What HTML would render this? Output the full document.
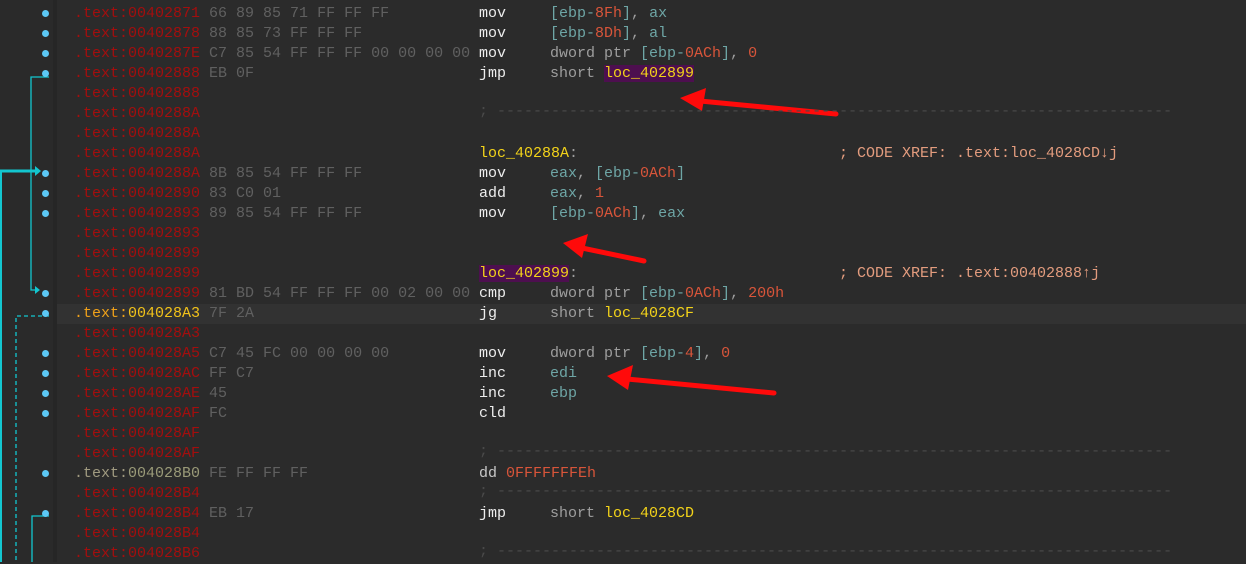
<!DOCTYPE html>
<html><head><meta charset="utf-8"><style>
html,body{margin:0;padding:0;}
body{width:1246px;height:562px;background:#2b2b2b;position:relative;overflow:hidden;font-family:"Liberation Mono",monospace;font-size:15px;}
.gut{position:absolute;left:0;top:0;width:53px;height:562px;background:#2a2a2a;}
.sep{position:absolute;left:53px;top:0;width:4px;height:562px;background:#262626;}
.hl{position:absolute;left:57px;top:304px;width:1189px;height:20px;background:#323232;}
.r{position:absolute;height:20px;line-height:20px;white-space:pre;}
.a{color:#a30e0e;}
.b{color:#606060;}
.m{color:#ededed;}
.g{color:#9e9e9e;}
.t{color:#6ea6a6;}
.n{color:#d8553a;}
.y{color:#f2d21a;}
.c{color:#e39c7e;}
.d{color:#4a4a4a;}
.dot{position:absolute;left:42px;width:7px;height:7px;border-radius:50%;background:#5cc8f5;}
.lb{background:#4d0f4f;}
</style></head><body>
<div class="gut"></div><div class="sep"></div><div class="hl"></div>
<svg width="1246" height="562" style="position:absolute;left:0;top:0">
<g stroke="#13c6cf" fill="none">
<path d="M49 77 H31 V290 H36" stroke-width="1.3"/>
<path d="M0 171 H36" stroke-width="3"/>
<path d="M1 171 V562" stroke-width="2"/>
<path d="M49 316 H16 V562" stroke-width="1.3" stroke-dasharray="4 3"/>
<path d="M49 516 H32 V562" stroke-width="1.3"/>
</g>
<g fill="#13c6cf"><path d="M35 166 L41 171 L35 176Z"/><path d="M35 286 L40 290 L35 294Z"/></g>
<g stroke="#ff0a0a" stroke-width="5" stroke-linecap="round" fill="#ff0a0a">
<line x1="836" y1="114" x2="700" y2="101"/>
<line x1="644" y1="261" x2="582" y2="248"/>
<line x1="774" y1="393" x2="627" y2="379"/>
</g>
<g fill="#ff0a0a">
<path d="M680 98 L706 88 L702 111Z"/>
<path d="M563 243 L588 234 L582 258Z"/>
<path d="M607 376 L633 365 L628 390Z"/>
</g>
</svg>
<div id="c"></div>
<script>
var rows=[
["871","66 89 85 71 FF FF FF",'<span class="m">mov</span>','<span class="t">[ebp-</span><span class="n">8Fh</span><span class="t">]</span><span class="g">, </span><span class="t">ax</span>'],
["878","88 85 73 FF FF FF",'<span class="m">mov</span>','<span class="t">[ebp-</span><span class="n">8Dh</span><span class="t">]</span><span class="g">, </span><span class="t">al</span>'],
["87E","C7 85 54 FF FF FF 00 00 00 00",'<span class="m">mov</span>','<span class="g">dword ptr </span><span class="t">[ebp-</span><span class="n">0ACh</span><span class="t">]</span><span class="g">, </span><span class="n">0</span>'],
["888","EB 0F",'<span class="m">jmp</span>','<span class="g">short </span><span class="y lb">loc_402899</span>'],
["888","","",""],
["88A","","SEP",""],
["88A","","",""],
["88A","","LBL",'<span class="y">loc_40288A</span><span class="g">:</span>','<span class="c">; CODE XREF: .text:loc_4028CD↓j</span>'],
["88A","8B 85 54 FF FF FF",'<span class="m">mov</span>','<span class="t">eax</span><span class="g">, </span><span class="t">[ebp-</span><span class="n">0ACh</span><span class="t">]</span>'],
["890","83 C0 01",'<span class="m">add</span>','<span class="t">eax</span><span class="g">, </span><span class="n">1</span>'],
["893","89 85 54 FF FF FF",'<span class="m">mov</span>','<span class="t">[ebp-</span><span class="n">0ACh</span><span class="t">]</span><span class="g">, </span><span class="t">eax</span>'],
["893","","",""],
["899","","",""],
["899","","LBL",'<span class="y lb">loc_402899</span><span class="g">:</span>','<span class="c">; CODE XREF: .text:00402888↑j</span>'],
["899","81 BD 54 FF FF FF 00 02 00 00",'<span class="m">cmp</span>','<span class="g">dword ptr </span><span class="t">[ebp-</span><span class="n">0ACh</span><span class="t">]</span><span class="g">, </span><span class="n">200h</span>'],
["8A3","7F 2A",'<span class="m">jg</span>','<span class="g">short </span><span class="y">loc_4028CF</span>'],
["8A3","","",""],
["8A5","C7 45 FC 00 00 00 00",'<span class="m">mov</span>','<span class="g">dword ptr </span><span class="t">[ebp-</span><span class="n">4</span><span class="t">]</span><span class="g">, </span><span class="n">0</span>'],
["8AC","FF C7",'<span class="m">inc</span>','<span class="t">edi</span>'],
["8AE","45",'<span class="m">inc</span>','<span class="t">ebp</span>'],
["8AF","FC",'<span class="m">cld</span>',''],
["8AF","","",""],
["8AF","","SEP",""],
["8B0","FE FF FF FF","LBL",'<span class="m" style="color:#c8c8c8">dd </span><span class="n">0FFFFFFFEh</span>'],
["8B4","","SEP",""],
["8B4","EB 17",'<span class="m">jmp</span>','<span class="g">short </span><span class="y">loc_4028CD</span>'],
["8B4","","",""],
["8B6","","SEP",""]
];
var dots=[0,1,2,3,8,9,10,14,15,17,18,19,20,23,25];
var h="";
var sep='<span class="d">; </span><span class="d" style="letter-spacing:0">'+"-".repeat(75)+'</span>';
rows.forEach(function(r,i){
 var top=4+20*i;
 var addr='<span class="a">.text:</span><span class="a">00402'+r[0]+'</span>';
 if(i==15) addr='<span style="color:#f0a01a">.text:</span><span style="color:#f2c21a">00402'+r[0]+'</span>';
 if(i==23) addr='<span style="color:#a09a80">.text:</span><span style="color:#9a9a78">00402'+r[0]+'</span>';
 h+='<div class="r" style="left:74px;top:'+top+'px">'+addr+' <span class="b">'+r[1]+'</span></div>';
 if(r[2]=="SEP"){h+='<div class="r" style="left:479px;top:'+(top-2)+'px">'+sep+'</div>';}
 else if(r[2]=="LBL"){h+='<div class="r" style="left:479px;top:'+top+'px">'+r[3]+'</div>';if(r[4])h+='<div class="r" style="left:839px;top:'+top+'px">'+r[4]+'</div>';}
 else if(r[2]){h+='<div class="r" style="left:479px;top:'+top+'px">'+r[2]+'</div><div class="r" style="left:550px;top:'+top+'px">'+r[3]+'</div>';}
});
dots.forEach(function(i){h+='<div class="dot" style="top:'+(10+20*i)+'px"></div>';});
document.getElementById("c").innerHTML=h;
</script>
</body></html>
